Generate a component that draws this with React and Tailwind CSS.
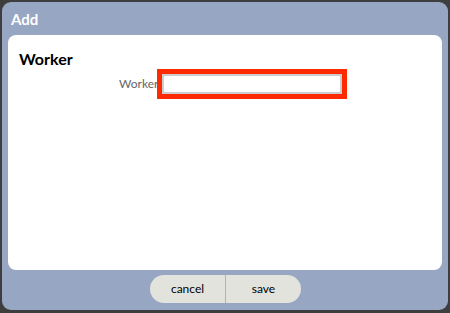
export default function App() {
  return (
    <div className="w-[450px] h-[313px] bg-[#3e3e3e] pt-[2px] pl-[2px] overflow-hidden" style={{ fontFamily: "Lato, 'Open Sans', sans-serif" }}>
      <div className="w-[446px] h-[308px] rounded-[9px] bg-[#97a6c3] flex flex-col">
        <div className="h-[33px] pl-[9px] pt-[8px] text-white font-bold text-[15px] leading-[18px]">Add</div>
        <div className="mx-[6px] h-[235px] bg-white rounded-[8px] pt-[14px] pl-[11px]">
          <div className="text-[16px] font-bold text-black leading-[20px]">Worker</div>
          <div className="flex items-center ml-[100px]">
            <span className="text-[12px] text-[#666] leading-[16px]">Worker</span>
            <div className="border-[5px] border-[#ff2a00] w-[190px] h-[30px] -ml-[1px]">
              <input className="w-full h-full border-2 border-[#cdcdcd] bg-white outline-none block" />
            </div>
          </div>
        </div>
        <div className="flex justify-center pt-[5px] pl-[1px]">
          <div className="flex h-[28px] rounded-full overflow-hidden bg-[#e3e3de] text-[12px] text-black">
            <button className="w-[76px] h-full flex items-center justify-center border-r border-[#a8b4cc]">cancel</button>
            <button className="w-[75px] h-full flex items-center justify-center">save</button>
          </div>
        </div>
      </div>
    </div>
  );
}
